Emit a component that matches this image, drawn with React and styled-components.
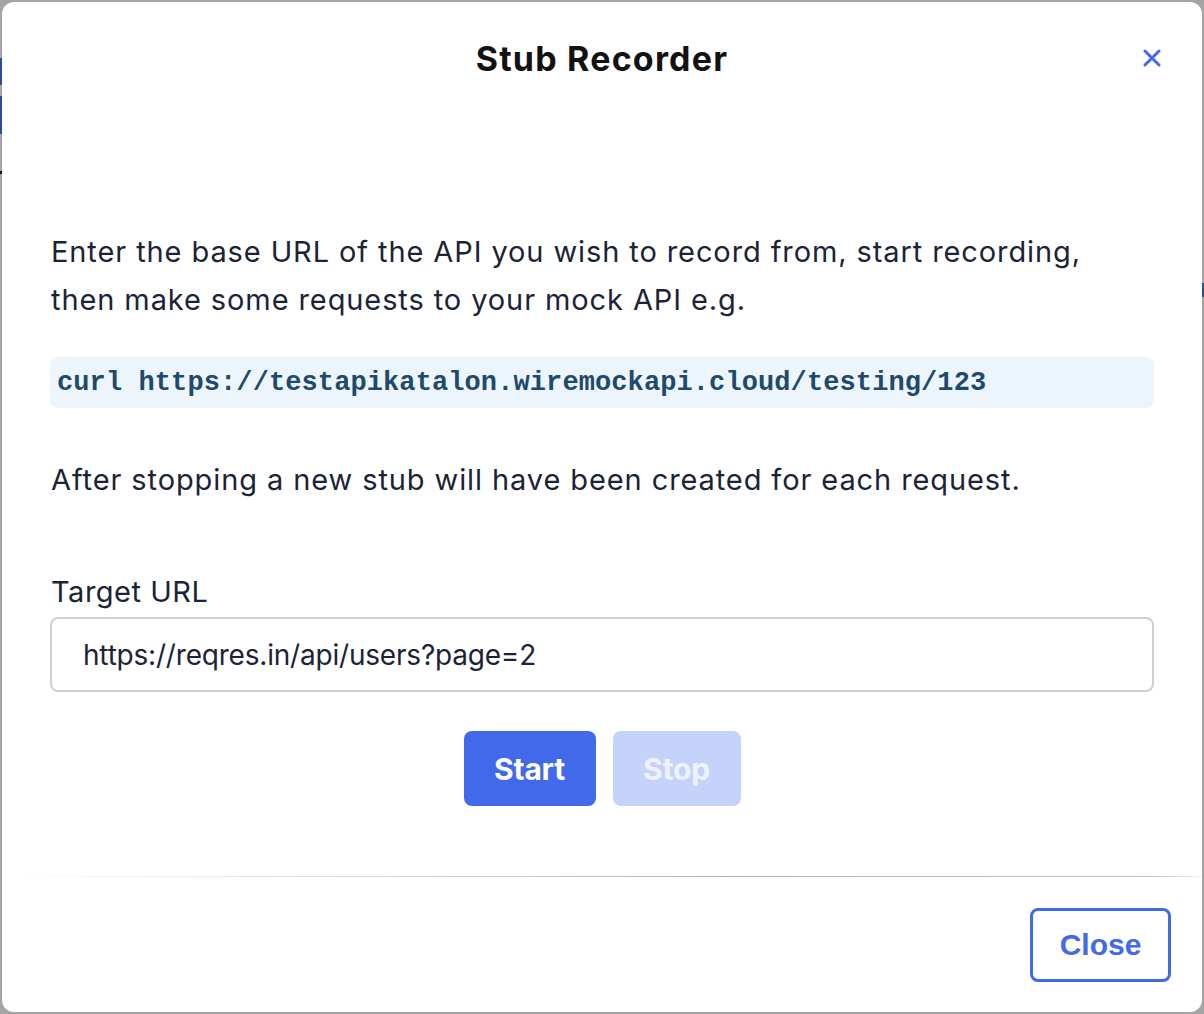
import { createGlobalStyle, styled } from 'styled-components'

const GlobalStyle = createGlobalStyle`
  html, body {
    margin: 0;
    padding: 0;
    background: #a4a4a4;
  }

  * {
    box-sizing: border-box;
  }
`

const Backdrop = styled.div`
  position: relative;
  width: 1204px;
  height: 1014px;
  padding: 2px;
  overflow: hidden;
  font-family: Inter, "Noto Sans", sans-serif;
`

// bits of the page underneath peeking out past the modal edge
const Peek = styled.span`
  position: absolute;
  width: 2px;
  background: ${({ $color }) => $color};
`

const Modal = styled.div`
  width: 1200px;
  height: 1010px;
  background: #fff;
  border-radius: 12px;
  display: flex;
  flex-direction: column;
`

const Header = styled.div`
  height: 112px;
  display: grid;
  grid-template-columns: 1fr auto 1fr;
  align-items: center;
  padding: 0 38px;
`

const Title = styled.h2`
  grid-column: 2;
  margin: 0;
  font-size: 34px;
  font-weight: 700;
  color: #121212;
  letter-spacing: 1.2px;
`

const CloseIcon = styled.button`
  justify-self: end;
  width: 24px;
  height: 24px;
  padding: 0;
  border: 0;
  background: none;
  display: flex;
  align-items: center;
  justify-content: center;
  cursor: pointer;
`

const Body = styled.div`
  padding: 114px 48px 0 48px;
  display: flex;
  flex-direction: column;
`

const Text = styled.p`
  margin: 0 0 0 1px;
  font-size: 29px;
  line-height: 48px;
  color: #1b2437;
  letter-spacing: 0.9px;
`

const Code = styled.div`
  margin: ${({ $top }) => $top}px 0 0 0;
  height: 51px;
  background: #edf5fc;
  border-radius: 8px;
  padding: 0 7px;
  display: flex;
  align-items: center;
  font-family: "Liberation Mono", monospace;
  font-weight: 700;
  font-size: 27px;
  letter-spacing: 0.1px;
  color: #1f4a6b;
`

const Spacer = styled.div`
  height: ${({ $h }) => $h}px;
`

const Label = styled.label`
  display: block;
  margin-left: 1px;
  font-size: 29px;
  line-height: 48px;
  color: #1b2437;
  letter-spacing: 0.5px;
`

const Input = styled.input`
  margin-top: 1px;
  width: 100%;
  height: 75px;
  border: 2px solid #cfcfcf;
  border-radius: 8px;
  padding: 0 31px;
  font-family: inherit;
  font-size: 28px;
  color: #1b2437;
  letter-spacing: -0.2px;
  outline: none;
`

const Actions = styled.div`
  margin-top: 39px;
  display: flex;
  justify-content: center;
  gap: 17px;
`

const ActionButton = styled.button`
  height: 75px;
  width: ${({ $w }) => $w}px;
  border: 0;
  border-radius: 8px;
  background: ${({ $disabled }) => ($disabled ? '#c5d2fa' : '#4169e9')};
  color: ${({ $disabled }) => ($disabled ? '#eef2fe' : '#fff')};
  font-family: inherit;
  font-size: 30px;
  font-weight: 700;
  letter-spacing: -0.2px;
  cursor: pointer;
`

const Divider = styled.div`
  margin-top: 70px;
  height: 1px;
  background: linear-gradient(to right, rgba(200, 200, 200, 0), #b4b4b4 60%, #c4c4c4 96%, rgba(220, 220, 220, 0.4));
`

const Footer = styled.div`
  flex: 1;
  display: flex;
  justify-content: flex-end;
  align-items: flex-start;
  padding: 31px 31px 0 0;
`

const CloseButton = styled.button`
  width: 141px;
  height: 74px;
  border: 3px solid #4169e9;
  border-radius: 8px;
  background: #fff;
  color: #4169e9;
  font-family: "Liberation Sans", Arial, sans-serif;
  font-size: 30px;
  font-weight: 700;
  cursor: pointer;
`

export default function App () {
  return (
    <>
      <GlobalStyle />
      <Backdrop>
        <Peek $color='#2b4aa0' style={{ left: 0, top: 58, height: 27 }} />
        <Peek $color='#2b4aa0' style={{ left: 0, top: 96, height: 38 }} />
        <Peek $color='#111' style={{ left: 0, top: 171, height: 3 }} />
        <Peek $color='#2b4aa0' style={{ right: 0, top: 283, height: 14 }} />

        <Modal>
          <Header>
            <Title>Stub Recorder</Title>
            <CloseIcon aria-label='Close'>
              <svg width='18' height='18' viewBox='0 0 18 18'>
                <path d='M2 2 L16 16 M16 2 L2 16' stroke='#4169e9' strokeWidth='3' strokeLinecap='round' />
              </svg>
            </CloseIcon>
          </Header>

          <Body>
            <Text>
              Enter the base URL of the API you wish to record from, start recording,
              <br />
              then make some requests to your mock API e.g.
            </Text>
            <Code $top={33}>curl https://testapikatalon.wiremockapi.cloud/testing/123</Code>
            <Spacer $h={48} />
            <Text>After stopping a new stub will have been created for each request.</Text>
            <Spacer $h={64} />
            <Label htmlFor='target-url'>Target URL</Label>
            <Input id='target-url' defaultValue='https://reqres.in/api/users?page=2' />
            <Actions>
              <ActionButton $w={132}>Start</ActionButton>
              <ActionButton $w={128} $disabled>Stop</ActionButton>
            </Actions>
          </Body>

          <Divider />

          <Footer>
            <CloseButton>Close</CloseButton>
          </Footer>
        </Modal>
      </Backdrop>
    </>
  )
}
